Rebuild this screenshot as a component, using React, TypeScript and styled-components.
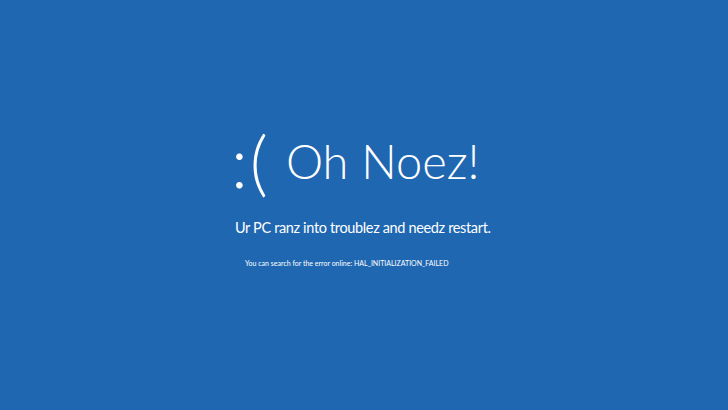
import styled, { createGlobalStyle } from "styled-components";

const GlobalStyle = createGlobalStyle`
  html, body {
    margin: 0;
    padding: 0;
    height: 100%;
    background: #2067b2;
  }
  #root {
    height: 100%;
  }
`;

const Screen = styled.main`
  width: 728px;
  height: 410px;
  background: #2067b2;
  color: #ffffff;
  font-family: Lato, "Open Sans", sans-serif;
  display: flex;
  flex-direction: column;
  padding: 129px 0 0 231px;
  box-sizing: border-box;
`;

const Headline = styled.div`
  display: flex;
  align-items: center;
  gap: 16px;
  height: 64px;
`;

const Sad = styled.span`
  font-size: 70px;
  font-weight: 300;
  line-height: 1;
  letter-spacing: 2px;
`;

const Title = styled.h1`
  margin: 0;
  font-size: 47px;
  font-weight: 300;
  line-height: 1;
`;

const Message = styled.p`
  margin: 25px 0 0 4px;
  font-size: 14.5px;
  letter-spacing: -0.35px;
  line-height: 20px;
`;

const Detail = styled.p`
  margin: 20px 0 0 14px;
  font-size: 7px;
  line-height: 10px;
`;

export default function App() {
  return (
    <>
      <GlobalStyle />
      <Screen>
        <Headline>
          <Sad>:(</Sad>
          <Title>Oh Noez!</Title>
        </Headline>
        <Message>Ur PC ranz into troublez and needz restart.</Message>
        <Detail>You can search for the error online: HAL_INITIALIZATION_FAILED</Detail>
      </Screen>
    </>
  );
}
